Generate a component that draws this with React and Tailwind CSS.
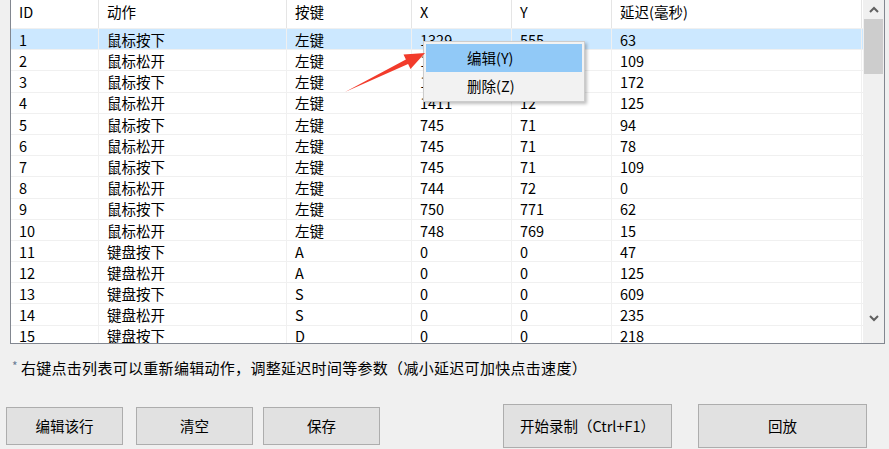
import React from "react";

const rows = [
  ["1", "鼠标按下", "左键", "1329", "555", "63"],
  ["2", "鼠标松开", "左键", "1329", "555", "109"],
  ["3", "鼠标按下", "左键", "1411", "12", "172"],
  ["4", "鼠标松开", "左键", "1411", "12", "125"],
  ["5", "鼠标按下", "左键", "745", "71", "94"],
  ["6", "鼠标松开", "左键", "745", "71", "78"],
  ["7", "鼠标按下", "左键", "745", "71", "109"],
  ["8", "鼠标松开", "左键", "744", "72", "0"],
  ["9", "鼠标按下", "左键", "750", "771", "62"],
  ["10", "鼠标松开", "左键", "748", "769", "15"],
  ["11", "键盘按下", "A", "0", "0", "47"],
  ["12", "键盘松开", "A", "0", "0", "125"],
  ["13", "键盘按下", "S", "0", "0", "609"],
  ["14", "键盘松开", "S", "0", "0", "235"],
  ["15", "键盘按下", "D", "0", "0", "218"],
];

const headers = ["ID", "动作", "按键", "X", "Y", "延迟(毫秒)"];
const widths = ["w-[88px]", "w-[188px]", "w-[125px]", "w-[100px]", "w-[100px]", "w-[250px]"];

const Btn = ({ children, className }) => (
  <button
    className={`flex items-center justify-center border border-[#adadad] bg-[#e1e1e1] text-[14.5px] text-black ${className}`}
  >
    {children}
  </button>
);

export default function App() {
  return (
    <div
      className="relative h-[449px] w-[889px] overflow-hidden bg-[#f0f0f0] text-black"
      style={{ fontFamily: '"Noto Sans CJK SC", "Noto Sans", sans-serif' }}
    >
      {/* list view */}
      <div className="ml-[10px] flex h-[344px] w-[875px] overflow-hidden border-x border-b border-[#828790] bg-white">
        <div className="w-[852px] text-[14.5px]">
          <div className="flex h-[28px]">
            {headers.map((h, i) => (
              <div
                key={h}
                className={`${widths[i]} flex h-full items-center border-r border-[#e5e5e5] pb-[4px] pl-[8px]`}
              >
                {h}
              </div>
            ))}
          </div>
          {rows.map((r, ri) => (
            <div
              key={ri}
              className={`flex h-[21.2px] border-t border-[#f0f0f0] ${ri === 0 ? "bg-[#cce8ff]" : ""}`}
            >
              {r.map((c, ci) => (
                <div
                  key={ci}
                  className={`${widths[ci]} flex h-full items-center border-r border-[#f0f0f0] pt-[2px] pl-[8px] leading-none`}
                >
                  {c}
                </div>
              ))}
            </div>
          ))}
        </div>
        {/* scrollbar */}
        <div className="flex w-[21px] flex-col items-center bg-[#f0f0f0]">
          <div className="flex h-[19px] w-full items-center justify-center">
            <svg width="10" height="7" viewBox="0 0 10 7">
              <path d="M1 6 L5 2 L9 6" stroke="#606060" strokeWidth="2" fill="none" />
            </svg>
          </div>
          <div className="h-[55px] w-[19px] bg-[#cdcdcd]" />
          <div className="flex-1" />
          <div className="flex h-[30px] w-full items-start justify-center pt-[2px]">
            <svg width="10" height="7" viewBox="0 0 10 7">
              <path d="M1 1 L5 5 L9 1" stroke="#606060" strokeWidth="2" fill="none" />
            </svg>
          </div>
        </div>
      </div>

      {/* hint */}
      <div className="mt-[13px] flex items-center pl-[12px] text-[15px] tracking-[0.3px]">
        <span className="mr-[3px] -mt-[5px] text-[12px] text-[#6b7c96]">*</span>
        <span>右键点击列表可以重新编辑动作，调整延迟时间等参数（减小延迟可加快点击速度）</span>
      </div>

      {/* buttons */}
      <div className="mt-[24px] flex items-center pl-[6px]">
        <Btn className="h-[38px] w-[117px]">编辑该行</Btn>
        <Btn className="ml-[13px] h-[38px] w-[117px]">清空</Btn>
        <Btn className="ml-[10px] h-[38px] w-[117px]">保存</Btn>
        <Btn className="ml-[123px] h-[44px] w-[169px]">开始录制（Ctrl+F1）</Btn>
        <Btn className="ml-[26px] h-[44px] w-[169px]">回放</Btn>
      </div>

      {/* context menu */}
      <div className="absolute left-[423px] top-[41px] h-[61px] w-[162px] border border-[#cccccc] bg-[#f2f2f2] p-[2px] text-[14.5px] shadow-[2px_2px_3px_rgba(0,0,0,0.25)]">
        <div className="flex h-[28px] items-center bg-[#91c9f7] pl-[41px]">编辑(Y)</div>
        <div className="flex h-[28px] items-center pl-[41px]">删除(Z)</div>
      </div>

      {/* annotation arrow */}
      <svg className="pointer-events-none absolute left-0 top-0" width="889" height="449">
        <polygon
          points="345,92 405.9,59.6 403.5,54.6 425,53 410.5,69 408.1,64"
          fill="#f23b2b"
        />
      </svg>
    </div>
  );
}
